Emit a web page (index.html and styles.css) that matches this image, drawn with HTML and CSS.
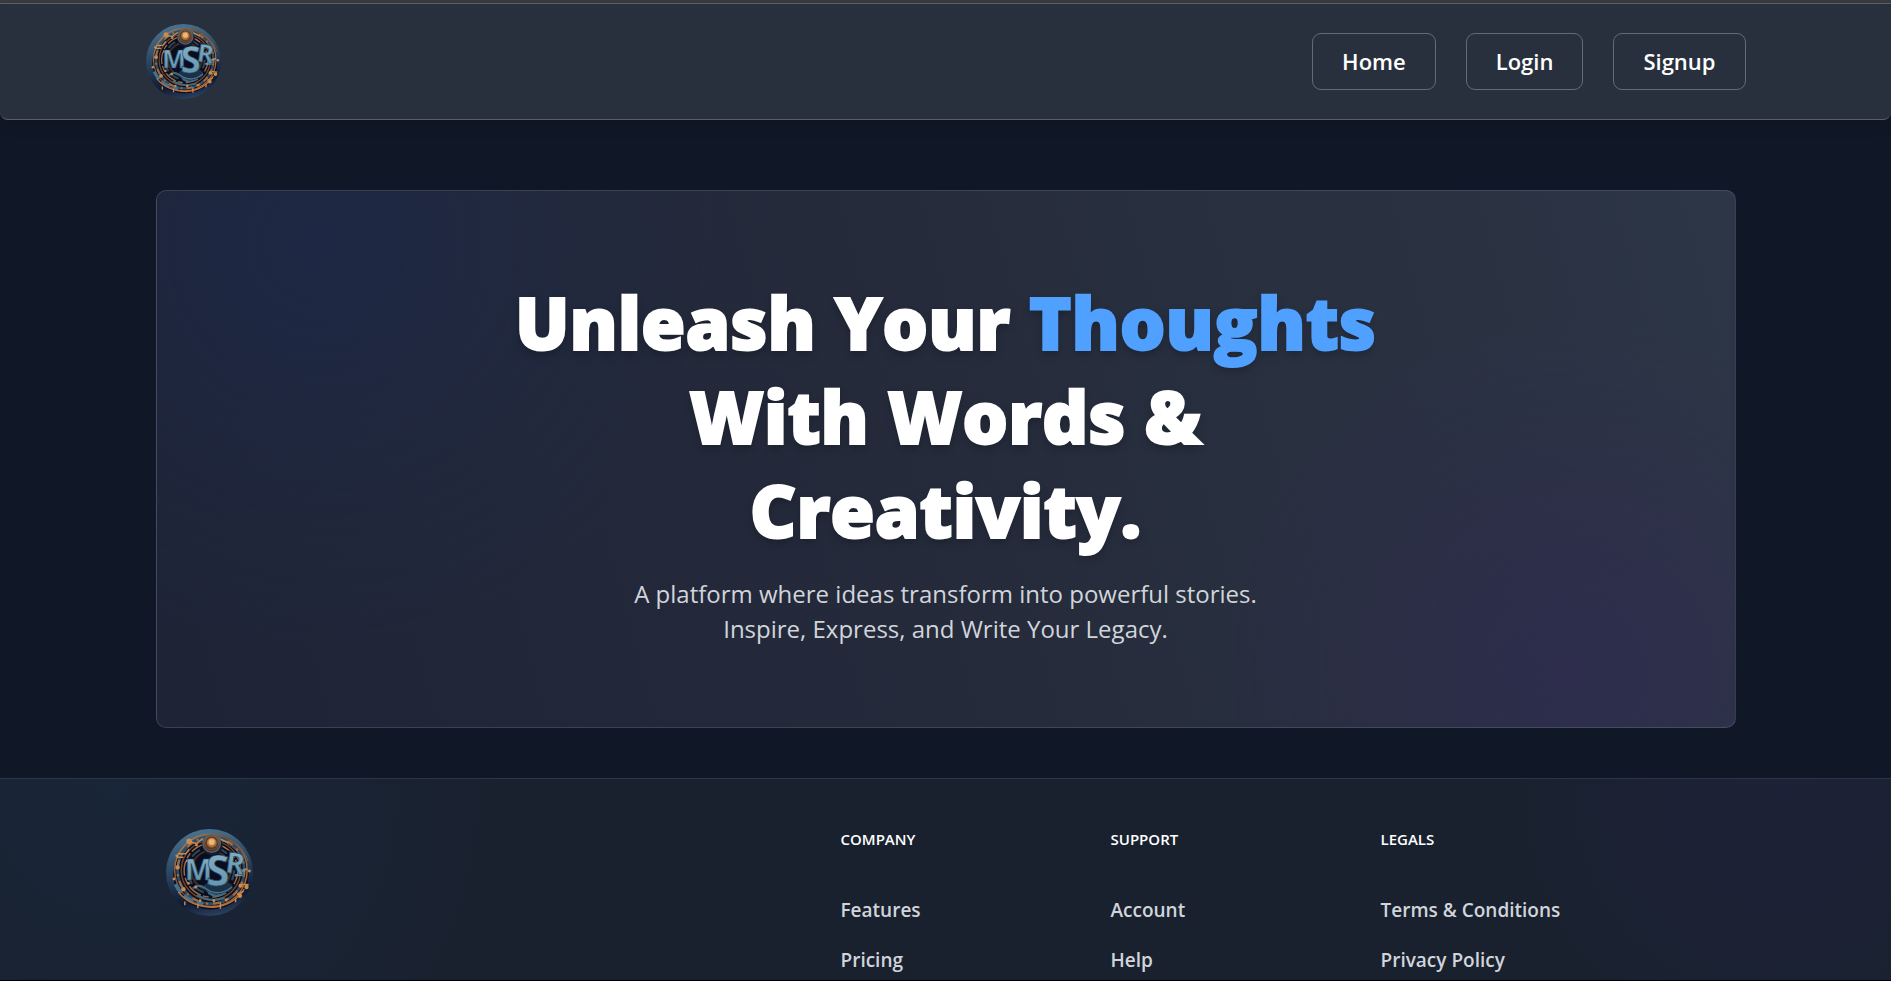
FILE: index.html
```html
<!DOCTYPE html>
<html lang="en">
<head>
<meta charset="utf-8">
<meta name="viewport" content="width=device-width, initial-scale=1">
<title>MSR Blog</title>
<link rel="stylesheet" href="styles.css">
</head>
<body>
<svg class="defs" aria-hidden="true">
  <defs>
    <linearGradient id="sky" x1="0.4" y1="0" x2="0.6" y2="1">
      <stop offset="0" stop-color="#4a7390"/><stop offset="0.5" stop-color="#253d58"/><stop offset="0.8" stop-color="#101a33"/><stop offset="1" stop-color="#2b4361"/>
    </linearGradient>
    <linearGradient id="copper" x1="0" y1="0" x2="1" y2="1">
      <stop offset="0" stop-color="#c68d54"/><stop offset="0.45" stop-color="#6d4029"/><stop offset="0.75" stop-color="#b56e3b"/><stop offset="1" stop-color="#8f502c"/>
    </linearGradient>
    <linearGradient id="steel" x1="0" y1="0" x2="0" y2="1">
      <stop offset="0" stop-color="#8fb8cc"/><stop offset="1" stop-color="#5a8ca8"/>
    </linearGradient>
    <radialGradient id="ball" cx="0.5" cy="0.4" r="0.6">
      <stop offset="0" stop-color="#ffe0a0"/><stop offset="0.35" stop-color="#b87a42"/><stop offset="1" stop-color="#3d2420"/>
    </radialGradient>
    <symbol id="emblem" viewBox="0 0 120 120">
      <circle cx="60" cy="60" r="60" fill="url(#sky)"/>
      <ellipse cx="62" cy="63" rx="52" ry="48" fill="#090d20"/>
      <g fill="none">
        <circle cx="62" cy="57" r="50" stroke="url(#copper)" stroke-width="2"/>
        <circle cx="62" cy="57" r="46" stroke="#2d4d62" stroke-width="4"/>
        <circle cx="62" cy="57" r="46" stroke="#a76a3c" stroke-width="3" stroke-dasharray="9 7 3 11"/>
        <circle cx="62" cy="57" r="41" stroke="#71432c" stroke-width="2"/>
        <circle cx="62" cy="57" r="37" stroke="#9c6b43" stroke-width="2" stroke-dasharray="20 5 8 3"/>
        <circle cx="62" cy="57" r="32" stroke="#2c485a" stroke-width="3" stroke-dasharray="14 6"/>
        <circle cx="62" cy="57" r="27" stroke="#432b24" stroke-width="3"/>
        <path d="M13 76Q24 99 51 104" stroke="#44728e" stroke-width="5" stroke-dasharray="15 5"/>
        <path d="M17 87Q34 108 66 108Q94 105 108 83" stroke="#be713d" stroke-width="2"/>
        <path d="M88 15Q107 26 113 44M84 20Q101 29 108 46M80 25Q96 33 103 48" stroke="#b97149" stroke-width="1" stroke-dasharray="3 1"/>
        <path d="M16 34H27L32 28M15 39H24M30 17L42 20L51 13M73 13L86 19M105 76L114 77M98 90L107 86M26 100V105M44 103V109M75 101V110M96 96V101" stroke="#c88a4e" stroke-width="2"/>
        <path d="M37 82Q48 73 59 87Q66 96 83 88M43 91Q60 102 81 95" stroke="#406a7f" stroke-width="3"/>
        <path d="M96 50L105 58L112 55M95 64L107 63" stroke="#6995ab" stroke-width="3"/>
      </g>
      <g fill="#c98b50">
        <circle cx="32" cy="17" r="4"/><circle cx="16" cy="53" r="3"/><circle cx="15" cy="37" r="2"/><circle cx="24" cy="83" r="3"/>
        <circle cx="47" cy="99" r="2"/><circle cx="103" cy="78" r="3"/><circle cx="111" cy="80" r="3"/><circle cx="102" cy="92" r="3"/>
        <circle cx="42" cy="22" r="2"/><circle cx="115" cy="58" r="2"/><circle cx="11" cy="69" r="2"/><circle cx="31" cy="75" r="2"/>
        <circle cx="66" cy="99" r="2"/><circle cx="83" cy="98" r="2"/><circle cx="29" cy="44" r="2"/><circle cx="41" cy="80" r="2"/>
      </g>
      <ellipse cx="72" cy="80" rx="20" ry="9" fill="#193149"/>
      <path d="M52 80Q71 96 91 80" fill="none" stroke="#53738a" stroke-width="2"/>
      <g class="emblem-letters">
        <text x="26" y="70" font-size="40">M</text>
        <text x="82" y="61" font-size="40" transform="rotate(8 90 50)">R</text>
        <text x="55" y="79" font-size="59">S</text>
      </g>
      <circle cx="64" cy="23" r="14" fill="#171a27"/>
      <circle cx="63" cy="20" r="12" fill="url(#ball)" stroke="#496575" stroke-width="2"/>
      <circle cx="63" cy="19" r="8" fill="none" stroke="#57392c" stroke-width="2"/>
      <circle cx="63" cy="18" r="4" fill="#e8b877"/>
    </symbol>
  </defs>
</svg>
<div class="top-strip"></div>
<header class="site-header">
  <div class="header-inner">
    <a href="#" aria-label="MSR home"><svg class="header-logo" aria-hidden="true"><use href="#emblem"/></svg></a>
    <nav class="nav">
      <button type="button">Home</button>
      <button type="button">Login</button>
      <button type="button">Signup</button>
    </nav>
  </div>
</header>
<main>
  <section class="hero">
    <h1>Unleash Your <span class="accent">Thoughts</span><br>With Words &amp;<br>Creativity.</h1>
    <p>A platform where ideas transform into powerful stories.<br>Inspire, Express, and Write Your Legacy.</p>
  </section>
</main>
<footer class="site-footer">
  <div class="footer-grid">
    <div><a href="#" aria-label="MSR home"><svg class="footer-logo" aria-hidden="true"><use href="#emblem"/></svg></a></div>
    <div>
      <h2>COMPANY</h2>
      <ul><li><a href="#">Features</a></li><li><a href="#">Pricing</a></li></ul>
    </div>
    <div>
      <h2>SUPPORT</h2>
      <ul><li><a href="#">Account</a></li><li><a href="#">Help</a></li></ul>
    </div>
    <div>
      <h2>LEGALS</h2>
      <ul><li><a href="#">Terms &amp; Conditions</a></li><li><a href="#">Privacy Policy</a></li></ul>
    </div>
  </div>
</footer>
</body>
</html>
```
FILE: styles.css
```css
* { box-sizing: border-box; }

body {
  margin: 0;
  min-height: 100vh;
  display: flex;
  flex-direction: column;
  background: #101726;
  color: #fff;
  font-family: "Segoe UI", "Open Sans", "Noto Sans", sans-serif;
}

.defs { position: absolute; width: 0; height: 0; }

.emblem-letters {
  fill: url(#steel);
  stroke: #284b64;
  stroke-width: 1px;
  font-family: "Open Sans", sans-serif;
  font-weight: 700;
}

.top-strip { height: 3px; background: #3b3b3d; }

.site-header {
  padding: 20px 24px;
  background: #29303d;
  border: 1px solid #59606b;
  border-width: 1px 0;
  border-radius: 0 0 8px 8px;
  box-shadow: 0 4px 16px rgba(0, 0, 0, 0.1);
}

.header-inner {
  max-width: 1600px;
  margin: 0 auto;
  display: flex;
  align-items: flex-start;
  justify-content: space-between;
}

.header-logo { display: block; width: 75px; height: 75px; }

.nav { display: flex; gap: 30px; padding-top: 9px; }

.nav button {
  height: 57px;
  padding: 0 29px 2px;
  border: 1px solid #646b78;
  border-radius: 9px;
  background: transparent;
  color: #fff;
  font: 600 22px/30px "Segoe UI", "Open Sans", "Noto Sans", sans-serif;
}

main { padding: 70px 24px 50px; }

.hero {
  max-width: 1580px;
  margin: 0 auto;
  padding: 84px 24px 81px;
  border: 1px solid rgba(255, 255, 255, 0.12);
  border-radius: 10px;
  text-align: center;
  background:
    radial-gradient(circle at 10% 10%, rgba(26, 41, 82, 0.45), transparent 400px),
    radial-gradient(circle at 90% 90%, rgba(50, 40, 88, 0.5), transparent 350px),
    linear-gradient(75deg, #1e2436, #252b3b 50%, #2d3646);
}

.hero h1 {
  margin: 0;
  font-size: 72px;
  font-weight: 900;
  line-height: 94px;
  -webkit-text-stroke: 2px currentColor;
  text-shadow: 0 4px 8px rgba(0, 0, 0, 0.25);
}

.accent { color: #50a0ff; }

.hero p {
  margin: 19px 0 0;
  color: #d1d5db;
  font-size: 24px;
  line-height: 35px;
}

.site-footer {
  flex: 1;
  padding-top: 50px;
  border-top: 1px solid #2c3643;
  border-bottom: 1px solid #000;
  background:
    radial-gradient(circle at 6% 5%, rgba(25, 40, 62, 0.6), transparent 380px),
    radial-gradient(circle at 94% 8%, rgba(31, 34, 58, 0.8), transparent 260px),
    #19212f;
}

.footer-grid {
  max-width: 1620px;
  margin: 0 auto;
  display: grid;
  grid-template-columns: 5fr 2fr 2fr 3fr;
}

.footer-grid > div { padding: 0 0 0 30px; }

.footer-logo { display: block; width: 87px; height: 87px; }

.footer-grid h2 {
  margin: 0 0 46px;
  font-size: 15px;
  font-weight: 600;
  line-height: 20px;
}

.footer-grid ul { margin: 0; padding: 0; list-style: none; display: grid; gap: 20px; }

.footer-grid li a {
  display: block;
  color: #d1d5db;
  font-size: 19px;
  font-weight: 600;
  line-height: 30px;
  text-decoration: none;
}
```
